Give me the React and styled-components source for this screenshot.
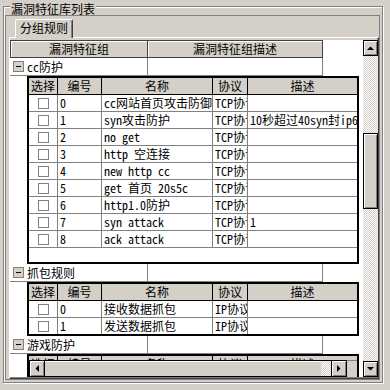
import React from "react";
import styled, { createGlobalStyle } from "styled-components";

const FONT = `"Noto Sans Mono CJK SC", "Noto Sans CJK SC", "Liberation Mono", monospace`;

const GlobalStyle = createGlobalStyle`
  html, body { margin: 0; padding: 0; background: #d4d0c8; }
  * { box-sizing: border-box; }
`;

const checker = `
  background-color: #fff;
  background-image: conic-gradient(#d4d0c8 25%, #fff 0 50%, #d4d0c8 0 75%, #fff 0);
  background-size: 2px 2px;
`;

const Page = styled.div`
  width: 390px;
  height: 390px;
  overflow: hidden;
  background: #d4d0c8;
  padding: 6px 0 0 3px;
  font-family: ${FONT};
  font-size: 12px;
  color: #000;
`;

const GroupBox = styled.div`
  width: 380px;
  height: 377px;
  border: 1px solid #808080;
  box-shadow: inset 1px 1px #fff, 1px 1px #fff;
  display: flex;
  flex-direction: column;
`;

const Caption = styled.div`
  align-self: flex-start;
  margin: -5px 0 0 6px;
  padding: 0 1px;
  height: 13px;
  line-height: 13px;
  background: #d4d0c8;
`;

const Frame = styled.div`
  margin-left: 1px;
  width: 375px;
  height: 365px;
  border: 1px solid #808080;
  display: flex;
  flex-direction: column;
`;

const TabStrip = styled.div`
  height: 21px;
  padding-left: 9px;
  display: flex;
  align-items: flex-end;
`;

const Tab = styled.div`
  position: relative;
  z-index: 1;
  width: 58px;
  height: 19px;
  margin-bottom: -1px;
  background: #d4d0c8;
  border-top: 1px solid #fff;
  border-left: 1px solid #fff;
  border-right: 1px solid #404040;
  border-top-left-radius: 2px;
  border-top-right-radius: 2px;
  box-shadow: inset -1px 0 #808080;
  text-align: center;
  line-height: 16px;
`;

const TabPanel = styled.div`
  margin-left: 3px;
  width: 370px;
  height: 342px;
  border-top: 1px solid #fff;
  border-left: 1px solid #fff;
  border-right: 1px solid #404040;
  border-bottom: 1px solid #404040;
  box-shadow: inset -1px -1px #808080;
  padding-top: 2px;
`;

const Grid = styled.div`
  width: 368px;
  height: 337px;
  display: flex;
`;

const Body = styled.div`
  width: 353px;
  height: 100%;
  background: #fff;
  overflow: hidden;
  display: flex;
  flex-direction: column;
  align-items: flex-start;
`;

const HeaderRow = styled.div`
  display: flex;
  height: 18px;
  flex-shrink: 0;
`;

const HeaderCell = styled.div`
  width: ${(p) => p.$w}px;
  background: #d4d0c8;
  border: 1px solid #404040;
  border-left-width: ${(p) => (p.$first ? 1 : 0)}px;
  box-shadow: inset 1px 1px #fff;
  text-align: center;
  line-height: 16px;
`;

const GroupRow = styled.div`
  display: flex;
  height: 18px;
  flex-shrink: 0;
  border-bottom: 1px solid #808080;
`;

const GroupCell = styled.div`
  width: ${(p) => p.$w}px;
  border-right: 1px solid #808080;
  display: flex;
  align-items: center;
  gap: 3px;
  padding-left: 3px;
  line-height: 16px;
  white-space: nowrap;
`;

const Toggle = styled.span`
  width: 11px;
  height: 11px;
  border: 1px solid #808080;
  background: #d4d0c8;
  display: flex;
  align-items: center;
  justify-content: center;
  &::after {
    content: "";
    width: 5px;
    height: 1px;
    background: #000;
  }
`;

const SubTable = styled.div`
  margin-left: 17px;
  width: 332px;
  height: ${(p) => p.$h}px;
  flex-shrink: 0;
  border: 2px solid #000;
  overflow: hidden;
  display: flex;
  flex-direction: column;
`;

const HeadRow = styled.div`
  display: flex;
  height: 17px;
  flex-shrink: 0;
  background: #d4d0c8;
  border-bottom: 1px solid #000;
`;

const HeadCell = styled.div`
  width: ${(p) => p.$w}px;
  flex-shrink: 0;
  border-right: 1px solid #000;
  text-align: center;
  line-height: 16px;
  &:last-child { border-right: none; }
`;

const Row = styled.div`
  display: flex;
  height: 17px;
  flex-shrink: 0;
  border-bottom: 1px solid #808080;
`;

const Cell = styled.div`
  width: ${(p) => p.$w}px;
  flex-shrink: 0;
  border-right: 1px solid #808080;
  padding-left: 2px;
  line-height: 16px;
  white-space: nowrap;
  overflow: hidden;
  display: flex;
  align-items: center;
  justify-content: ${(p) => (p.$center ? "center" : "flex-start")};
  &:last-child { border-right: none; }
`;

const Check = styled.span`
  width: 11px;
  height: 11px;
  border: 1px solid #808080;
  background: #fff;
  margin-left: -2px;
`;

const HeadClip = styled.div`
  height: 4px;
  overflow: hidden;
  flex-shrink: 0;
`;

const HScroll = styled.div`
  height: 17px;
  display: flex;
  flex-shrink: 0;
`;

const ScrollBtn = styled.div`
  width: ${(p) => p.$w || 15}px;
  height: ${(p) => p.$h || 16}px;
  flex-shrink: 0;
  background: #d4d0c8;
  border: 1px solid #000;
  box-shadow: inset 1px 1px #fff, inset -1px -1px #808080;
  display: flex;
  align-items: center;
  justify-content: center;
`;

const HThumb = styled.div`
  width: ${(p) => p.$w}px;
  background: #d4d0c8;
  border-top: 1px solid #000;
  border-bottom: 1px solid #000;
  box-shadow: inset 0 1px #fff;
`;

const HTrack = styled.div`
  width: ${(p) => p.$w}px;
  border-top: 1px solid #000;
  border-bottom: 1px solid #000;
  ${checker}
`;

const Corner = styled.div`
  flex: 1;
  background: #d4d0c8;
  border-top: 1px solid #808080;
`;

const VScroll = styled.div`
  width: 15px;
  height: 100%;
  display: flex;
  flex-direction: column;
`;

const VTrack = styled.div`
  height: ${(p) => (p.$h ? `${p.$h}px` : "auto")};
  flex: ${(p) => (p.$h ? "none" : 1)};
  ${checker}
`;

const VThumb = styled.div`
  height: ${(p) => p.$h}px;
  flex-shrink: 0;
  background: #d4d0c8;
  border: 1px solid #000;
  box-shadow: inset 1px 1px #fff, inset -1px -1px #808080;
`;

const Arrow = ({ dir }) => {
  const pts = {
    up: "0,4 7,4 3.5,0.5",
    down: "0,0 7,0 3.5,3.5",
    left: "4,0 4,7 0.5,3.5",
    right: "0,0 0,7 3.5,3.5",
  }[dir];
  const vertical = dir === "up" || dir === "down";
  return (
    <svg width={vertical ? 7 : 4} height={vertical ? 4 : 7} viewBox={vertical ? "0 0 7 4" : "0 0 4 7"}>
      <polygon points={pts} fill="#000" />
    </svg>
  );
};

const COLS = [29, 44, 111, 35, 109];
const HEADS = ["选择", "编号", "名称", "协议", "描述"];

const ccRules = [
  ["0", "cc网站首页攻击防御", "TCP协议", ""],
  ["1", "syn攻击防护", "TCP协议", "10秒超过40syn封ip60秒"],
  ["2", "no get", "TCP协议", ""],
  ["3", "http 空连接", "TCP协议", ""],
  ["4", "new http cc", "TCP协议", ""],
  ["5", "get 首页 20s5c", "TCP协议", ""],
  ["6", "http1.0防护", "TCP协议", ""],
  ["7", "syn attack", "TCP协议", "1"],
  ["8", "ack attack", "TCP协议", ""],
];

const captureRules = [
  ["0", "接收数据抓包", "IP协议", ""],
  ["1", "发送数据抓包", "IP协议", ""],
];

function Head() {
  return (
    <HeadRow>
      {HEADS.map((h, i) => (
        <HeadCell key={h} $w={COLS[i]}>{h}</HeadCell>
      ))}
    </HeadRow>
  );
}

function Rules({ rows }) {
  return rows.map((r) => (
    <Row key={r[0]}>
      <Cell $w={COLS[0]} $center><Check /></Cell>
      <Cell $w={COLS[1]}>{r[0]}</Cell>
      <Cell $w={COLS[2]}>{r[1]}</Cell>
      <Cell $w={COLS[3]}>{r[2]}</Cell>
      <Cell $w={COLS[4]}>{r[3]}</Cell>
    </Row>
  ));
}

function Group({ name }) {
  return (
    <GroupRow>
      <GroupCell $w={138}>
        <Toggle />
        {name}
      </GroupCell>
      <GroupCell $w={175} />
    </GroupRow>
  );
}

export default function App() {
  return (
    <>
      <GlobalStyle />
      <Page>
        <GroupBox>
          <Caption>漏洞特征库列表</Caption>
          <Frame>
            <TabStrip>
              <Tab>分组规则</Tab>
            </TabStrip>
            <TabPanel>
              <Grid>
                <Body>
                  <HeaderRow>
                    <HeaderCell $w={138} $first>漏洞特征组</HeaderCell>
                    <HeaderCell $w={175}>漏洞特征组描述</HeaderCell>
                  </HeaderRow>

                  <Group name="cc防护" />
                  <SubTable $h={188}>
                    <Head />
                    <Rules rows={ccRules} />
                  </SubTable>

                  <Group name="抓包规则" />
                  <SubTable $h={54}>
                    <Head />
                    <Rules rows={captureRules} />
                  </SubTable>

                  <Group name="游戏防护" />
                  <SubTable $h={25}>
                    <HeadClip>
                      <Head />
                    </HeadClip>
                    <HScroll>
                      <ScrollBtn $w={16} $h={17}><Arrow dir="left" /></ScrollBtn>
                      <HThumb $w={276} />
                      <HTrack $w={10} />
                      <ScrollBtn $w={16} $h={17}><Arrow dir="right" /></ScrollBtn>
                      <Corner />
                    </HScroll>
                  </SubTable>
                </Body>
                <VScroll>
                  <ScrollBtn><Arrow dir="up" /></ScrollBtn>
                  <VTrack $h={77} />
                  <VThumb $h={76} />
                  <VTrack />
                  <ScrollBtn><Arrow dir="down" /></ScrollBtn>
                </VScroll>
              </Grid>
            </TabPanel>
          </Frame>
        </GroupBox>
      </Page>
    </>
  );
}
